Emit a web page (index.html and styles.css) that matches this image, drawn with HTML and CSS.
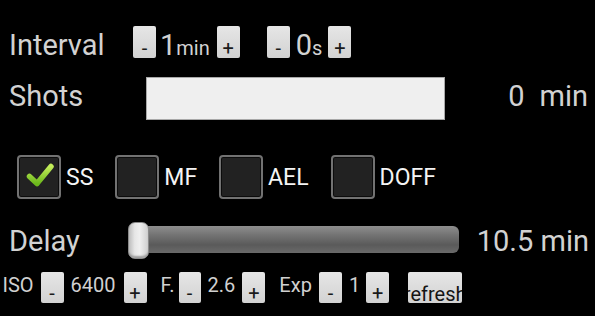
FILE: index.html
```html
<!DOCTYPE html>
<html>
<head>
<meta charset="utf-8">
<link rel="stylesheet" href="styles.css">
</head>
<body>
<div class="screen">
  <div class="row row-interval">
    <span class="big w-interval">Interval</span>
    <span class="btn btn-tall">-</span>
    <span class="big num-1">1</span><span class="unit">min</span>
    <span class="btn btn-tall m-plus1">+</span>
    <span class="btn btn-tall m-grp2">-</span>
    <span class="big num-0">0</span><span class="unit">s</span>
    <span class="btn btn-tall m-plus2">+</span>
  </div>

  <div class="row row-shots">
    <span class="big w-shots">Shots</span>
    <div class="field"></div>
    <div class="result"><span class="big">0</span><span class="big gap-min">min</span></div>
  </div>

  <div class="row row-checks">
    <label class="check">
      <span class="box">
        <svg width="40" height="40" viewBox="0 0 40 40">
          <defs>
            <linearGradient id="g" x1="0" y1="0" x2="0" y2="1">
              <stop offset="0" stop-color="#c4ee5a"/>
              <stop offset="1" stop-color="#6cb81c"/>
            </linearGradient>
          </defs>
          <path d="M10.5 19.5 L18 26.5 L32 9.5" fill="none" stroke="url(#g)" stroke-width="5.5" stroke-linecap="round" stroke-linejoin="round"/>
        </svg>
      </span>
      <span class="ctext">SS</span>
    </label>
    <label class="check"><span class="box"></span><span class="ctext">MF</span></label>
    <label class="check"><span class="box"></span><span class="ctext">AEL</span></label>
    <label class="check"><span class="box"></span><span class="ctext">DOFF</span></label>
  </div>

  <div class="row row-delay">
    <span class="big w-delay">Delay</span>
    <div class="slider"><span class="thumb"></span></div>
    <span class="big delay-val">10.5 min</span>
  </div>

  <div class="row row-bottom">
    <span class="small">ISO</span>
    <span class="btn btn-s m7">-</span>
    <span class="small m7">6400</span>
    <span class="btn btn-s m8">+</span>
    <span class="small m14">F.</span>
    <span class="btn btn-s btn-22 m4">-</span>
    <span class="small m7">2.6</span>
    <span class="btn btn-s m7">+</span>
    <span class="small m14">Exp</span>
    <span class="btn btn-s m7">-</span>
    <span class="small m7">1</span>
    <span class="btn btn-s m6">+</span>
    <span class="btn btn-s refresh">refresh</span>
  </div>
</div>
</body>
</html>
```

FILE: styles.css
```css
html, body {
  margin: 0;
  padding: 0;
  background: #000;
}
body {
  width: 595px;
  height: 316px;
  overflow: hidden;
  font-family: Roboto, "Liberation Sans", sans-serif;
}
.screen {
  display: flex;
  flex-direction: column;
}
.row {
  display: flex;
  align-items: flex-start;
  flex: none;
}
.big {
  font-size: 29px;
  line-height: 39px;
  color: #d2d2d2;
  white-space: nowrap;
  flex: none;
}
.unit {
  font-size: 20px;
  line-height: 44px;
  color: #d2d2d2;
  flex: none;
}
.small {
  font-size: 20px;
  line-height: 26px;
  color: #d0d0d0;
  flex: none;
}
.btn {
  flex: none;
  display: flex;
  align-items: flex-end;
  justify-content: center;
  width: 23px;
  box-sizing: border-box;
  background: linear-gradient(to bottom, #e6e6e6, #d2d2d2);
  border-radius: 2px;
  color: #1a1a1a;
  font-size: 20px;
  line-height: 20px;
  white-space: nowrap;
}

/* row 1 */
.row-interval {
  margin-top: 26px;
  height: 32px;
  padding-left: 9px;
}
.w-interval { width: 124px; }
.btn-tall {
  height: 32px;
  padding-bottom: 0;
}
.num-1 { margin-left: 4px; }
.m-plus1 { margin-left: 7px; }
.m-grp2 { margin-left: 27px; }
.num-0 { margin-left: 6px; }
.m-plus2 { margin-left: 6px; }

/* row 2 */
.row-shots {
  margin-top: 19px;
  height: 43px;
  padding-left: 9px;
  padding-right: 7px;
}
.w-shots { width: 137px; }
.field {
  width: 299px;
  height: 43px;
  box-sizing: border-box;
  background: #efefef;
  border: 1px solid #a8a8a8;
  flex: none;
}
.result {
  margin-left: auto;
  display: flex;
}
.gap-min { margin-left: 15px; }

/* row 3 */
.row-checks {
  margin-top: 35px;
  height: 44px;
  padding-left: 17px;
  align-items: center;
  gap: 22px;
}
.check {
  display: flex;
  align-items: center;
  gap: 5px;
}
.box {
  width: 44px;
  height: 44px;
  box-sizing: border-box;
  border: 2px solid #727272;
  border-radius: 4px;
  background: #222;
  box-shadow: inset 0 0 0 1px #0c0c0c;
  display: flex;
  align-items: center;
  justify-content: center;
  flex: none;
}
.box svg { display: block; }
.ctext {
  font-size: 23px;
  color: #f4f4f4;
}

/* row 4 */
.row-delay {
  margin-top: 23px;
  height: 37px;
  padding-left: 9px;
  padding-right: 6px;
}
.w-delay { width: 120px; }
.slider {
  position: relative;
  width: 330px;
  height: 27px;
  margin-top: 4px;
  border-radius: 6px;
  background: linear-gradient(to bottom, #8e8e8e 0%, #727272 35%, #5a5a5a 70%, #6a6a6a 100%);
  flex: none;
}
.thumb {
  position: absolute;
  left: -1px;
  top: -4px;
  width: 21px;
  height: 37px;
  box-sizing: border-box;
  border-radius: 7px;
  border: 1px solid #8a8a8a;
  background: linear-gradient(to right, #bdbdbd 0%, #e6e6e6 30%, #efefef 55%, #cfcfcf 100%);
  box-shadow: inset 0 -3px 2px -1px #9c9c9c;
}
.delay-val { margin-left: auto; }

/* row 5 */
.row-bottom {
  margin-top: 13px;
  height: 31px;
  padding-left: 2.5px;
}
.btn-s {
  height: 31px;
}
.btn-22 { width: 22px; }
.m4 { margin-left: 4px; }
.m6 { margin-left: 6px; }
.m7 { margin-left: 7px; }
.m8 { margin-left: 8px; }
.m14 { margin-left: 14px; }
.refresh {
  width: 54px;
  margin-left: 19px;
  color: #141414;
  overflow: hidden;
  line-height: 18px;
}
```
